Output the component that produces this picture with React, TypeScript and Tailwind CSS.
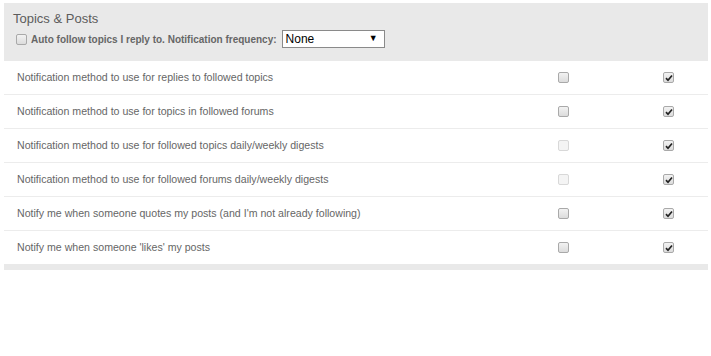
import React from "react";

function Box({ checked = false, disabled = false }: { checked?: boolean; disabled?: boolean }) {
  return (
    <span
      className={
        "inline-flex h-[11px] w-[11px] shrink-0 items-center justify-center rounded-[2px] border " +
        (disabled
          ? "border-[#d8d8d8] bg-[#f4f4f4]"
          : "border-[#a9a9a9] bg-gradient-to-b from-[#f2f2f2] to-[#dcdcdc]")
      }
    >
      {checked && (
        <svg width="8" height="8" viewBox="0 0 8 8">
          <path d="M1 4.2 L3 6.3 L7 1.5" stroke="#222" strokeWidth="1.7" fill="none" />
        </svg>
      )}
    </span>
  );
}

const rows: { label: string; dis: boolean }[] = [
  { label: "Notification method to use for replies to followed topics", dis: false },
  { label: "Notification method to use for topics in followed forums", dis: false },
  { label: "Notification method to use for followed topics daily/weekly digests", dis: true },
  { label: "Notification method to use for followed forums daily/weekly digests", dis: true },
  { label: "Notify me when someone quotes my posts (and I'm not already following)", dis: false },
  { label: "Notify me when someone 'likes' my posts", dis: false },
];

export default function App() {
  return (
    <div
      className="h-[356px] w-[711px] bg-white pt-[3px] pl-[4px] pr-[3px]"
      style={{ fontFamily: '"Liberation Sans", Arial, sans-serif' }}
    >
      <div className="flex h-[58px] flex-col bg-[#e9e9e9] pl-[9px]">
        <div className="mt-[8px] text-[13px] leading-[16px] text-[#5c5c5c]">Topics &amp; Posts</div>
        <div className="mt-[3px] flex items-center">
          <span className="ml-[3px] flex">
            <Box />
          </span>
          <span className="ml-[4px] text-[10px] font-bold text-[#666]">
            Auto follow topics I reply to. Notification frequency:
          </span>
          <div className="ml-[5px] flex h-[18px] w-[103px] items-center justify-between border border-[#8a8a8a] bg-white pl-[3px] pr-[6px] text-[12px] text-black">
            <span>None</span>
            <span className="text-[9px]">▼</span>
          </div>
        </div>
      </div>
      {rows.map((r, i) => (
        <div
          key={i}
          className={
            "flex items-center bg-white " +
            (i < rows.length - 1 ? "h-[34px] border-b border-[#ececec]" : "h-[33px]")
          }
        >
          <div className="w-[554px] pl-[13px] text-[10.6px] text-[#666]">{r.label}</div>
          <Box disabled={r.dis} />
          <span className="ml-[94px] flex">
            <Box checked />
          </span>
        </div>
      ))}
      <div className="h-[6px] bg-[#e9e9e9]" />
    </div>
  );
}
